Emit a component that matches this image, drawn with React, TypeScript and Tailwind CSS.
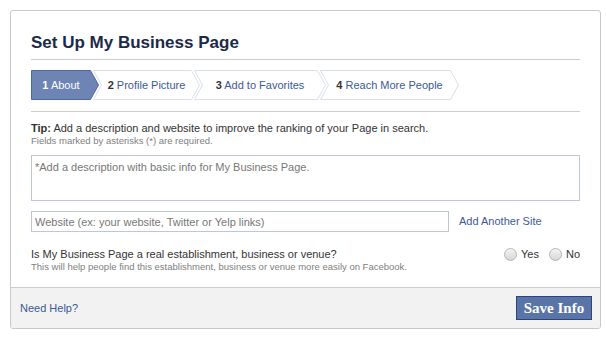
import React from 'react';

type Step = { num: string; label: string; width: number; first?: boolean; active?: boolean };

const steps: Step[] = [
  { num: '1', label: 'About', width: 68, first: true, active: true },
  { num: '2', label: 'Profile Picture', width: 107 },
  { num: '3', label: 'Add to Favorites', width: 132 },
  { num: '4', label: 'Reach More People', width: 139 },
];

const StepShape: React.FC<{ step: Step }> = ({ step }) => {
  const w = step.width;
  const notch = step.first ? 0 : 8;
  const pts = step.first
    ? `0.5,0.5 ${w - 8.5},0.5 ${w - 0.5},15 ${w - 8.5},29.5 0.5,29.5`
    : `0.5,0.5 ${w - 8.5},0.5 ${w - 0.5},15 ${w - 8.5},29.5 0.5,29.5 8.5,15`;
  return (
    <div
      className={`relative h-[30px] shrink-0 flex items-center justify-center ${step.first ? '' : '-ml-[6px]'}`}
      style={{ width: w, paddingLeft: notch, paddingRight: 8 }}
    >
      <svg className="absolute inset-0" width={w} height={30} viewBox={`0 0 ${w} 30`}>
        <polygon
          points={pts}
          fill={step.active ? '#6d84b4' : '#ffffff'}
          stroke={step.active ? '#4e69a2' : '#d8dfea'}
          strokeWidth={1}
        />
      </svg>
      <span className="relative text-[11px] whitespace-nowrap">
        <span className={`font-bold ${step.active ? 'text-white' : 'text-[#333333]'}`}>{step.num}</span>{' '}
        <span className={step.active ? 'text-white' : 'text-[#3b5998]'}>{step.label}</span>
      </span>
    </div>
  );
};

const Radio: React.FC<{ label: string }> = ({ label }) => (
  <label className="flex items-center gap-[4px] cursor-pointer">
    <span className="w-[13px] h-[13px] rounded-full border border-[#b5b5b5] bg-gradient-to-b from-[#f4f4f4] to-[#d6d6d6]" />
    <span className="text-[11px] text-[#333333]">{label}</span>
  </label>
);

const App: React.FC = () => {
  return (
    <div className="min-h-screen bg-white pt-[10px] pl-[10px] font-['Liberation_Sans',Arial,sans-serif]">
      <div className="w-[591px] border border-[#c9c9c9] rounded-[3px] bg-white overflow-hidden">
        <div className="px-[20px] pt-[22px] pb-[14px]">
          <div className="pb-[6px] border-b border-[#cccccc]">
            <h1 className="text-[17px] leading-[20px] font-bold text-[#1c2a47]">Set Up My Business Page</h1>
          </div>

          {/* pasos */}
          <div className="pt-[10px] pb-[11px] border-b border-[#cccccc]">
            <div className="flex">
              {steps.map((s) => (
                <StepShape key={s.num} step={s} />
              ))}
            </div>
          </div>

          <p className="mt-[10px] text-[11px] leading-[13px] text-[#333333]">
            <span className="font-bold">Tip:</span> Add a description and website to improve the ranking of your Page in search.
          </p>
          <p className="text-[9.5px] leading-[12px] text-[#808080]">Fields marked by asterisks (*) are required.</p>

          <textarea
            placeholder="*Add a description with basic info for My Business Page."
            className="mt-[8px] block w-full h-[46px] border border-[#bdc7d8] px-[3px] py-[3px] text-[11px] text-[#333333] placeholder-[#777777] resize-none outline-none"
          />

          <div className="mt-[10px] flex items-center">
            <input
              type="text"
              placeholder="Website (ex: your website, Twitter or Yelp links)"
              className="w-[418px] h-[21px] border border-[#bdc7d8] px-[3px] text-[11px] text-[#333333] placeholder-[#777777] outline-none"
            />
            <a className="ml-[10px] text-[11px] text-[#3b5998] cursor-pointer">Add Another Site</a>
          </div>

          <div className="mt-[15px] flex justify-between items-start">
            <div>
              <p className="text-[11px] leading-[14px] text-[#333333]">
                Is My Business Page a real establishment, business or venue?
              </p>
              <p className="text-[9.5px] leading-[12px] text-[#808080]">
                This will help people find this establishment, business or venue more easily on Facebook.
              </p>
            </div>
            <div className="flex items-center gap-[10px] h-[14px]">
              <Radio label="Yes" />
              <Radio label="No" />
            </div>
          </div>
        </div>

        <div className="h-[41px] border-t border-[#cccccc] bg-[#f2f2f2] flex items-center justify-between pl-[9px] pr-[8px]">
          <a className="text-[11px] text-[#3b5998] cursor-pointer">Need Help?</a>
          <button className="w-[76px] h-[24px] bg-[#5b74a8] border border-[#29447e] text-white text-[15px] font-bold font-['Liberation_Serif',serif] leading-none">
            Save Info
          </button>
        </div>
      </div>
    </div>
  );
};

export default App;
